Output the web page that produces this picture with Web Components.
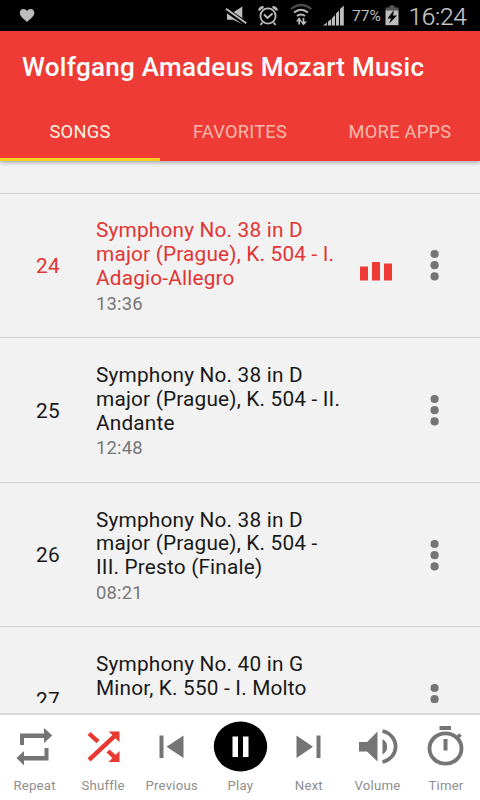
<!DOCTYPE html>
<html lang="en">
<head>
<meta charset="utf-8">
<title>Wolfgang Amadeus Mozart Music</title>
<style>
html,body{margin:0;padding:0;width:480px;height:800px;overflow:hidden;background:#f2f2f2}
body{font-family:Roboto,"Liberation Sans",sans-serif}
</style>
</head>
<body>
<music-app></music-app>
<script>
const define = (name, render) => customElements.define(name, class extends HTMLElement {
  connectedCallback() {
    if (this.shadowRoot) return;
    const t = document.createElement('template');
    t.innerHTML = render(this);
    this.attachShadow({mode: 'open'}).append(t.content.cloneNode(true));
  }
});

define('status-bar', () => `
<style>
:host{display:block;height:31px;background:#000;color:#bdbdbd;flex:none}
.row{display:flex;align-items:center;height:31px;box-sizing:border-box;padding-left:19px}
svg{display:block;flex:none}
.heart{margin-right:190px}
.pct{font-size:15.500px;width:31px;line-height:31px;margin-top:2px;padding-left:1px;box-sizing:border-box;letter-spacing:.1px;white-space:nowrap}
.time{font-size:24.500px;line-height:31px;margin:2px 0 0 9.500px;white-space:nowrap;font-weight:300;color:#c8c8c8;-webkit-text-stroke:.2px #c8c8c8;letter-spacing:-.3px}
</style>
<div class="row">
<svg class="heart" width="16" height="31" viewBox="19 0 16 31"><path fill="#bdbdbd" d="M27 22C22.500 18 19.800 16 19.800 12.800C19.800 10.500 21.500 9 23.500 9C25.200 9 26.400 9.900 27.100 11.100C27.800 9.900 29 9 30.700 9C32.700 9 34.300 10.500 34.300 12.800C34.300 16 31.500 18 27 22Z"/></svg>
<svg width="126" height="31" viewBox="225 0 126 31" fill="none" stroke="#bdbdbd">
<path fill="#bdbdbd" stroke="none" d="M227 12.500H233L242.300 6.500V24L233 19.700H227Z"/>
<path stroke="#000" stroke-width="4.800" d="M225.500 9.500L246.500 24"/><path stroke-width="2" d="M226 8.800L246.300 23.300"/>
<circle cx="268" cy="16" r="7.600" stroke-width="1.800"/><path stroke-width="1.900" d="M264 14.500L267.500 18L272.500 13.500M262.500 22.500L260.500 25M273.500 22.500L275.500 25"/><path stroke-width="2.300" d="M259 10.500Q260 7.500 263.500 7M277 10.500Q276 7.500 272.500 7"/>
<path stroke="#4b4b4b" stroke-width="2.200" d="M291 9Q301 1 311.500 9"/><path stroke-width="2" d="M294 12.500Q301 7 308 12.500M297 16Q301 13 305 16"/>
<path stroke-width="1.700" d="M299.200 24.500V18M303.500 18V24"/><path fill="#bdbdbd" stroke="none" d="M296 21.500L299.200 17.500L302 21.500ZM300.500 21.500L303.500 25.500L307 21.500Z"/>
<path fill="#bdbdbd" stroke="none" d="M323 25.500L327 22.500V25.500ZM328 21.500L331.300 19V25.500H328ZM332 18L335 15V25.500H332ZM336 13.500L339 10.500V25.500H336ZM340 9L343.800 5.500V25.500H340Z"/>
</svg>
<span class="pct">77%</span>
<svg style="margin-left:3px" width="14" height="31" viewBox="385 0 14 31"><path fill="#555" d="M389.500 5.500H394.500V7.500H398.500V11H385.500V7.500H389.500Z"/><path fill="#bdbdbd" d="M385.500 10.500H398.500V25.200H385.500Z"/><path fill="#000" d="M394 10L387.500 18.500H391L389.200 23.500L397 15.500H393Z"/></svg>
<span class="time">16:24</span>
</div>`);

define('app-header', () => `
<style>
:host{display:block;height:130px;background:#ef3b36;color:#fff;flex:none;position:relative;z-index:1;box-shadow:0 1px 5px rgba(0,0,0,.38)}
h1{margin:0;padding:0 0 0 22px;height:72px;line-height:73px;font-size:26px;font-weight:500;letter-spacing:.29px;white-space:nowrap}
nav{display:grid;grid-template-columns:repeat(3,160px);height:58px}
</style><h1>Wolfgang Amadeus Mozart Music</h1><nav><slot></slot></nav>`);

define('tab-item', () => `
<style>
:host{display:block;box-sizing:border-box;height:58px;text-align:center;font-size:18.300px;line-height:58px;letter-spacing:.25px;color:#fbb9ac;white-space:nowrap}
:host([active]){color:#fff3e4;border-bottom:3px solid #f6cf25}
</style><slot></slot>`);

define('song-row', h => `
<style>
:host{display:grid;grid-template-columns:96px 264px 50px 50px;height:144.600px;box-sizing:border-box;border-bottom:1px solid #d0d0d0;color:#191919;flex:none;align-items:center}
:host([playing]){color:#e33434}
.num{text-align:center;font-size:20.800px;letter-spacing:.3px;padding-top:1.600px}
.body{height:92px}
.title{font-size:20.800px;line-height:23.750px;height:71.250px;letter-spacing:.18px;white-space:nowrap}
.dur{font-size:18.400px;line-height:24px;color:#777;letter-spacing:.2px;margin-top:1px}
svg{display:block}
</style>
<div class="num">${h.getAttribute('num')}</div>
<div class="body"><div class="title"><slot></slot></div><div class="dur">${h.getAttribute('time') || ''}</div></div>
<div>${h.hasAttribute('playing') ? '<svg width="34" height="32" viewBox="0 0 34 32" fill="#ef3b36"><path d="M0 17.500H8V31.500H0ZM12 13H20V31.500H12ZM24 14.500H32V31.500H24Z"/></svg>' : ''}</div>
<svg width="50" height="32" viewBox="410 250 50 32" fill="#757575"><circle cx="434.600" cy="255" r="4.100"/><circle cx="434.600" cy="266.200" r="4.100"/><circle cx="434.600" cy="277.400" r="4.100"/></svg>`);

define('song-list', () => `
<style>
:host{display:flex;flex-direction:column;height:542px;overflow:hidden;background:#f2f2f2;flex:none}
.rest{height:31.700px;flex:none;border-bottom:1px solid #d0d0d0}
</style><div class="rest"></div><slot></slot>`);

const icons = {
repeat: '<path d="M20 745V733.500H44V728L52.300 735.500L44 743V738H24V745ZM48.500 748V760.500H24V765.500L16.500 758L24 751V756H44.500V748Z"/>',
shuffle: '<path d="M87.500 735L90.500 732L99.500 740L96.500 743.300ZM108.800 731.500H119.500V742.300ZM87.500 758.300L113 734.500L116.300 737.500L90.500 761.500ZM106.500 752.500L109.500 749.500L116.500 755.800L113.300 759ZM119.500 751V762H108.500Z"/>',
previous: '<path d="M160 735.500H164V758H160ZM184 735.500V758L167 746.800Z"/>',
play: '<ellipse cx="240.500" cy="746.500" rx="26.700" ry="25" fill="#000"/><path fill="#fff" d="M232.500 736.500H238V757H232.500ZM243 736.500H248.500V757H243Z"/>',
next: '<path d="M317 735.500H321V758H317ZM297 735.500V758L313.500 746.800Z"/>',
volume: '<path d="M359 742H367L377.500 731.500V761.500L367 751.500H359ZM382.500 739Q387.200 741.500 387.200 747Q387.200 752 382.500 754.500Z"/><path fill="none" stroke="#757575" stroke-width="3.700" d="M382.500 731C400 735.500 400 757.500 382.500 762"/>',
timer: '<path d="M440 726H451.500V730H440ZM444 739H448V750.500H444Z"/><ellipse cx="446" cy="748.500" rx="16" ry="15.200" fill="none" stroke="#757575" stroke-width="3.800"/><path stroke="#757575" stroke-width="3.700" d="M457 738.500L461 734.500"/>'
};
const left = {repeat:0,shuffle:69,previous:137.500,play:206,next:274.500,volume:343,timer:411.500};
define('player-button', h => { const k = h.getAttribute('icon'); return `
<style>
:host{display:flex;flex-direction:column;align-items:center;color:#757575}
:host([on]){color:#e93832}
svg{display:block;width:68.500px;height:62px;fill:currentColor}
span{font-size:13.200px;line-height:18px;color:#8e8e8e;letter-spacing:.2px;padding-left:.6px}
</style><svg viewBox="${left[k]} 715 68.500 62">${icons[k]}</svg><span><slot></slot></span>`; });

define('player-bar', () => `
<style>
:host{display:grid;grid-template-columns:repeat(7,1fr);height:87px;background:#fff;border-top:2px solid #d9d9d9;box-sizing:border-box;margin-top:10px;flex:none}
</style><slot></slot>`);

define('music-app', () => `
<style>:host{display:flex;flex-direction:column;width:480px;height:800px;background:#f2f2f2;overflow:hidden}</style>
<status-bar></status-bar>
<app-header><tab-item active>SONGS</tab-item><tab-item>FAVORITES</tab-item><tab-item>MORE APPS</tab-item></app-header>
<song-list>
<song-row num="24" time="13:36" playing>Symphony No. 38 in D<br>major (Prague), K. 504 - I.<br>Adagio-Allegro</song-row>
<song-row num="25" time="12:48">Symphony No. 38 in D<br>major (Prague), K. 504 - II.<br>Andante</song-row>
<song-row num="26" time="08:21">Symphony No. 38 in D<br>major (Prague), K. 504 -<br>III. Presto (Finale)</song-row>
<song-row num="27">Symphony No. 40 in G<br>Minor, K. 550 - I. Molto</song-row>
</song-list>
<player-bar>
<player-button icon="repeat">Repeat</player-button><player-button icon="shuffle" on>Shuffle</player-button><player-button icon="previous">Previous</player-button><player-button icon="play">Play</player-button><player-button icon="next">Next</player-button><player-button icon="volume">Volume</player-button><player-button icon="timer">Timer</player-button>
</player-bar>`);
</script>
</body>
</html>
